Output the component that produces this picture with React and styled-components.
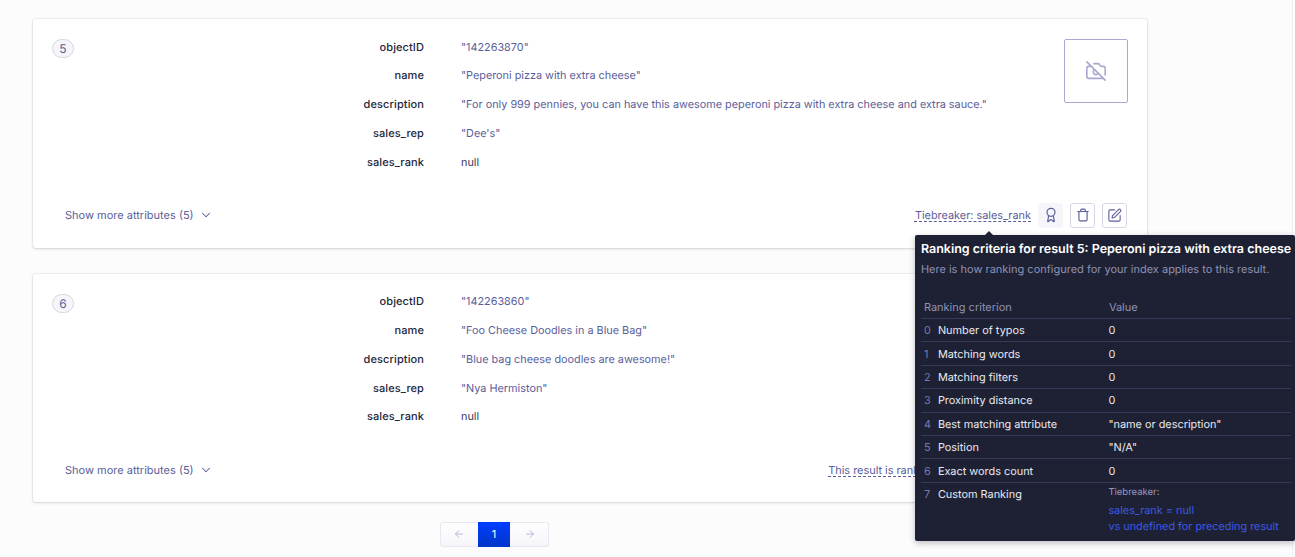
import React from 'react';
import styled, { createGlobalStyle } from 'styled-components';
import { ArrowLeft, ArrowRight, Award, CameraOff, ChevronDown, SquarePen, Trash } from 'lucide-react';

const results = [
    {
        rank: 5,
        attrs: [
            ['objectID', '"142263870"'],
            ['name', '"Peperoni pizza with extra cheese"'],
            ['description', '"For only 999 pennies, you can have this awesome peperoni pizza with extra cheese and extra sauce."'],
            ['sales_rep', '"Dee\'s"'],
            ['sales_rank', 'null'],
        ],
        ranking: 'Tiebreaker: sales_rank',
        open: true,
    },
    {
        rank: 6,
        attrs: [
            ['objectID', '"142263860"'],
            ['name', '"Foo Cheese Doodles in a Blue Bag"'],
            ['description', '"Blue bag cheese doodles are awesome!"'],
            ['sales_rep', '"Nya Hermiston"'],
            ['sales_rank', 'null'],
        ],
        ranking: 'This result is ranked by its own position',
    },
];

const criteria = [
    ['Number of typos', '0'],
    ['Matching words', '0'],
    ['Matching filters', '0'],
    ['Proximity distance', '0'],
    ['Best matching attribute', '"name or description"'],
    ['Position', '"N/A"'],
    ['Exact words count', '0'],
];

export default function App() {
    return (
        <Page>
            <GlobalStyle />
            {results.map((result) => (
                <Card key={result.rank}>
                    <Top>
                        <Badge>{result.rank}</Badge>
                        <Attributes>
                            {result.attrs.map(([key, value]) => (
                                <React.Fragment key={key}>
                                    <Key>{key}</Key>
                                    <Value $plain={value === 'null'}>{value}</Value>
                                </React.Fragment>
                            ))}
                        </Attributes>
                        <Placeholder>
                            <CameraOff size={22} strokeWidth={1.75} />
                        </Placeholder>
                    </Top>
                    <Footer>
                        <ShowMore>
                            Show more attributes (5)
                            <ChevronDown size={14} strokeWidth={1.75} />
                        </ShowMore>
                        <Actions>
                            <RankingWrap>
                                <RankingLink>{result.ranking}</RankingLink>
                                {result.open && <RankingTooltip />}
                            </RankingWrap>
                            <IconButton $active>
                                <Award size={16} strokeWidth={1.75} />
                            </IconButton>
                            <IconButton>
                                <Trash size={14} strokeWidth={2} />
                            </IconButton>
                            <IconButton>
                                <SquarePen size={15} strokeWidth={1.75} />
                            </IconButton>
                        </Actions>
                    </Footer>
                </Card>
            ))}
            <Pagination>
                <PageArrow>
                    <ArrowLeft size={12} />
                </PageArrow>
                <PageCurrent>1</PageCurrent>
                <PageArrow>
                    <ArrowRight size={12} />
                </PageArrow>
            </Pagination>
        </Page>
    );
}

function RankingTooltip() {
    return (
        <Tooltip>
            <TooltipTitle>Ranking criteria for result 5: Peperoni pizza with extra cheese</TooltipTitle>
            <TooltipText>Here is how ranking configured for your index applies to this result.</TooltipText>
            <HeadRow>
                <span>Ranking criterion</span>
                <span>Value</span>
            </HeadRow>
            {criteria.map(([name, value], i) => (
                <CriterionRow key={name}>
                    <Index>{i}</Index>
                    <span>{name}</span>
                    <span>{value}</span>
                </CriterionRow>
            ))}
            <LastRow>
                <Index>7</Index>
                <span>Custom Ranking</span>
                <div>
                    <TieLabel>Tiebreaker:</TieLabel>
                    <TieValue>sales_rank = null</TieValue>
                    <TieValue>vs undefined for preceding result</TieValue>
                </div>
            </LastRow>
        </Tooltip>
    );
}

const GlobalStyle = createGlobalStyle`
    html, body {
        margin: 0;
        height: 557px;
        overflow: hidden;
        background: #fcfcfd;
    }
    body {
        font-family: Inter, "Liberation Sans", sans-serif;
        font-size: 11px;
        color: #23263b;
        text-rendering: geometricPrecision;
    }
`;

const Page = styled.div`
    width: 1293px;
    height: 557px;
    box-sizing: border-box;
    padding: 19px 0 0 33px;
    border-right: 1px solid #eeeef4;
`;

const Card = styled.div`
    width: 1114px;
    height: 228.7px;
    box-sizing: border-box;
    margin-bottom: 26px;
    padding: 20px 19px 20px 19px;
    display: flex;
    flex-direction: column;
    justify-content: space-between;
    background: #fff;
    border-radius: 3px;
    box-shadow: 0 0 0 1px rgba(35, 38, 59, 0.05), 0 1px 3px 0 rgba(35, 38, 59, 0.15);
`;

const Top = styled.div`
    display: flex;
    align-items: flex-start;
`;

const Badge = styled.div`
    width: 22px;
    height: 19px;
    box-sizing: border-box;
    display: flex;
    align-items: center;
    justify-content: center;
    border: 1px solid #d6d6e7;
    border-radius: 10px;
    background: #f5f5fa;
    color: #5a5e9a;
    font-size: 12px;
`;

const Attributes = styled.div`
    flex: 1;
    display: grid;
    grid-template-columns: 350px 1fr;
    column-gap: 37px;
    grid-auto-rows: 28.75px;
    margin-top: -6.8px;
    align-items: center;
`;

const Key = styled.div`
    text-align: right;
    font-weight: 500;
    letter-spacing: 0.1px;
    color: #23263b;
`;

const Value = styled.div`
    font-size: 10.85px;
    color: ${(props) => (props.$plain ? '#36395a' : '#5a5e9a')};
`;

const Placeholder = styled.div`
    width: 64px;
    height: 64px;
    box-sizing: border-box;
    display: flex;
    align-items: center;
    justify-content: center;
    border: 1px solid #a9a8d2;
    border-radius: 2px;
    color: #a9a8d2;
`;

const Footer = styled.div`
    display: flex;
    align-items: center;
    justify-content: space-between;
    padding: 0 1px 0 13px;
`;

const ShowMore = styled.div`
    display: flex;
    align-items: center;
    gap: 5px;
    color: #5a5e9a;
`;

const Actions = styled.div`
    display: flex;
    align-items: center;
    gap: 7px;
`;

const RankingWrap = styled.div`
    position: relative;
`;

const RankingLink = styled.span`
    font-size: 10.9px;
    color: #5a5e9a;
    text-decoration: underline dashed 1px;
    text-underline-offset: 2px;
`;

const IconButton = styled.div`
    width: 25px;
    height: 25px;
    box-sizing: border-box;
    display: flex;
    align-items: center;
    justify-content: center;
    border-radius: 3px;
    color: #5a5e9a;
    border: 1px solid ${(props) => (props.$active ? '#f5f5fa' : '#d6d6e7')};
    background: ${(props) => (props.$active ? '#f5f5fa' : '#fff')};
`;

const Tooltip = styled.div`
    position: absolute;
    z-index: 5;
    left: 0;
    top: 27px;
    width: 380px;
    height: 306px;
    box-sizing: border-box;
    padding: 7px 3px 0 6px;
    background: #1e2133;
    border-radius: 2px;
    box-shadow: 0 2px 6px rgba(35, 38, 59, 0.3);
    color: #e8e8f2;

    &::before {
        content: '';
        position: absolute;
        left: 70px;
        top: -4px;
        border-left: 4px solid transparent;
        border-right: 4px solid transparent;
        border-bottom: 4px solid #1e2133;
    }
`;

const TooltipTitle = styled.div`
    font-size: 12.5px;
    line-height: 16px;
    font-weight: 600;
    color: #fff;
    white-space: nowrap;
`;

const TooltipText = styled.div`
    margin-top: 3px;
    line-height: 16px;
    color: #8f91b5;
    white-space: nowrap;
`;

const rowColumns = `
    display: grid;
    grid-template-columns: 14px 170.5px 1fr;
    align-items: center;
    padding-left: 3px;
    box-sizing: border-box;
    width: 370px;
`;

const HeadRow = styled.div`
    display: grid;
    grid-template-columns: 185px 1fr;
    align-items: center;
    padding-left: 3px;
    width: 370px;
    height: 22.8px;
    box-sizing: border-box;
    margin-top: 19px;
    color: #8f91b5;
    border-bottom: 1px solid #36395a;
`;

const CriterionRow = styled.div`
    ${rowColumns}
    height: 23.4px;
    border-bottom: 1px solid #36395a;
    font-size: 10.9px;
`;

const LastRow = styled.div`
    ${rowColumns}
    align-items: start;
    padding-top: 4.5px;
    font-size: 10.9px;
`;

const Index = styled.span`
    color: #777aaf;
`;

const TieLabel = styled.div`
    font-size: 9.5px;
    color: #9698c3;
    margin-bottom: 3.5px;
`;

const TieValue = styled.div`
    font-size: 10.85px;
    line-height: 16px;
    color: #3a5ae6;
`;

const Pagination = styled.div`
    display: grid;
    grid-template-columns: 38px 32px 39px;
    width: 109px;
    height: 25px;
    margin: -6.4px 0 0 407px;
    border-radius: 3px;
    box-shadow: inset 0 0 0 1px #e8e8f2;
    overflow: hidden;
    background: linear-gradient(#fff, #f5f5fa);
`;

const PageArrow = styled.div`
    display: flex;
    align-items: center;
    justify-content: center;
    color: #b6b7d5;
`;

const PageCurrent = styled.div`
    display: flex;
    align-items: center;
    justify-content: center;
    color: #fff;
    background: linear-gradient(#003dff, #0036c8);
`;
